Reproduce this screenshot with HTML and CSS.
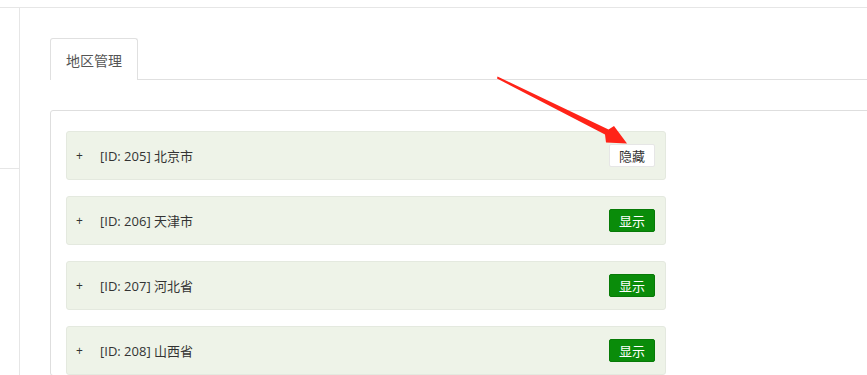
FILE: index.html
```html
<!DOCTYPE html>
<html lang="zh-CN">
<head>
<meta charset="utf-8">
<title>地区管理</title>
<link rel="stylesheet" href="styles.css">
</head>
<body>
<div class="topbar"></div>
<div class="layout">
  <aside class="sidebar">
    <div class="side-block"></div>
  </aside>
  <main class="main">
    <div class="tabs">
      <div class="tab active">地区管理</div>
      <div class="tab-rest"></div>
    </div>
    <div class="panel">
      <div class="row">
        <span class="plus">+</span>
        <span class="label">[ID: 205] 北京市</span>
        <button class="btn btn-hide">隐藏</button>
      </div>
      <div class="row">
        <span class="plus">+</span>
        <span class="label">[ID: 206] 天津市</span>
        <button class="btn btn-show">显示</button>
      </div>
      <div class="row">
        <span class="plus">+</span>
        <span class="label">[ID: 207] 河北省</span>
        <button class="btn btn-show">显示</button>
      </div>
      <div class="row">
        <span class="plus">+</span>
        <span class="label">[ID: 208] 山西省</span>
        <button class="btn btn-show">显示</button>
      </div>
    </div>
  </main>
</div>
<svg class="arrow" width="867" height="375" viewBox="0 0 867 375">
  <polygon points="497.5,76.5 608.5,129.5 614,126 627,143.5 606,142.5 605,134.5 497,78.5" fill="#ff2318"/>
</svg>
</body>
</html>
```

FILE: styles.css
```css
html, body {
  margin: 0;
  padding: 0;
  background: #fff;
  overflow: hidden;
  height: 375px;
}
body {
  font-family: "Open Sans", "Noto Sans CJK SC", sans-serif;
  font-size: 13px;
  color: #333;
  position: relative;
}
.topbar {
  height: 7px;
  border-bottom: 1px solid #e6e6e6;
}
.layout {
  display: flex;
  height: 367px;
  overflow: hidden;
}
.sidebar {
  width: 19px;
  flex: none;
  border-right: 1px solid #e6e6e6;
}
.side-block {
  height: 160px;
  border-bottom: 1px solid #e6e6e6;
}
.main {
  flex: 1;
  padding: 30px 0 0 30px;
  min-width: 0;
  overflow: hidden;
}
.tabs {
  display: flex;
  align-items: flex-end;
  height: 42px;
}
.tab {
  box-sizing: border-box;
  height: 42px;
  padding: 0 15px;
  line-height: 42px;
  font-family: "Noto Sans CJK SC", sans-serif;
  font-size: 14px;
  color: #555;
  border: 1px solid #e0e0e0;
  border-bottom: none;
  border-radius: 3px 3px 0 0;
  background: #fff;
}
.tab-rest {
  flex: 1;
  border-bottom: 1px solid #e0e0e0;
}
.panel {
  margin-top: 30px;
  margin-right: -20px;
  border: 1px solid #dedede;
  border-radius: 3px;
  padding: 20px 15px 0 15px;
  display: flex;
  flex-direction: column;
  gap: 16px;
}
.row {
  box-sizing: border-box;
  width: 600px;
  height: 49px;
  flex: none;
  display: flex;
  align-items: center;
  padding: 0 10px 0 9px;
  background: #eef3e8;
  border: 1px solid #e4e9df;
  border-radius: 3px;
}
.plus {
  width: 24px;
  font-size: 12px;
  color: #333;
}
.label {
  flex: 1;
  font-size: 13px;
  color: #333;
}
.btn {
  box-sizing: border-box;
  width: 46px;
  height: 23px;
  padding: 0;
  font-family: "Noto Sans CJK SC", sans-serif;
  font-size: 13px;
  border-radius: 2px;
  cursor: pointer;
}
.btn-hide {
  background: #fff;
  color: #333;
  border: 1px solid #e6e6e6;
}
.btn-show {
  background: #0a8c0a;
  color: #fff;
  border: 1px solid #077a07;
}
.arrow {
  position: absolute;
  left: 0;
  top: 0;
  pointer-events: none;
}
```
